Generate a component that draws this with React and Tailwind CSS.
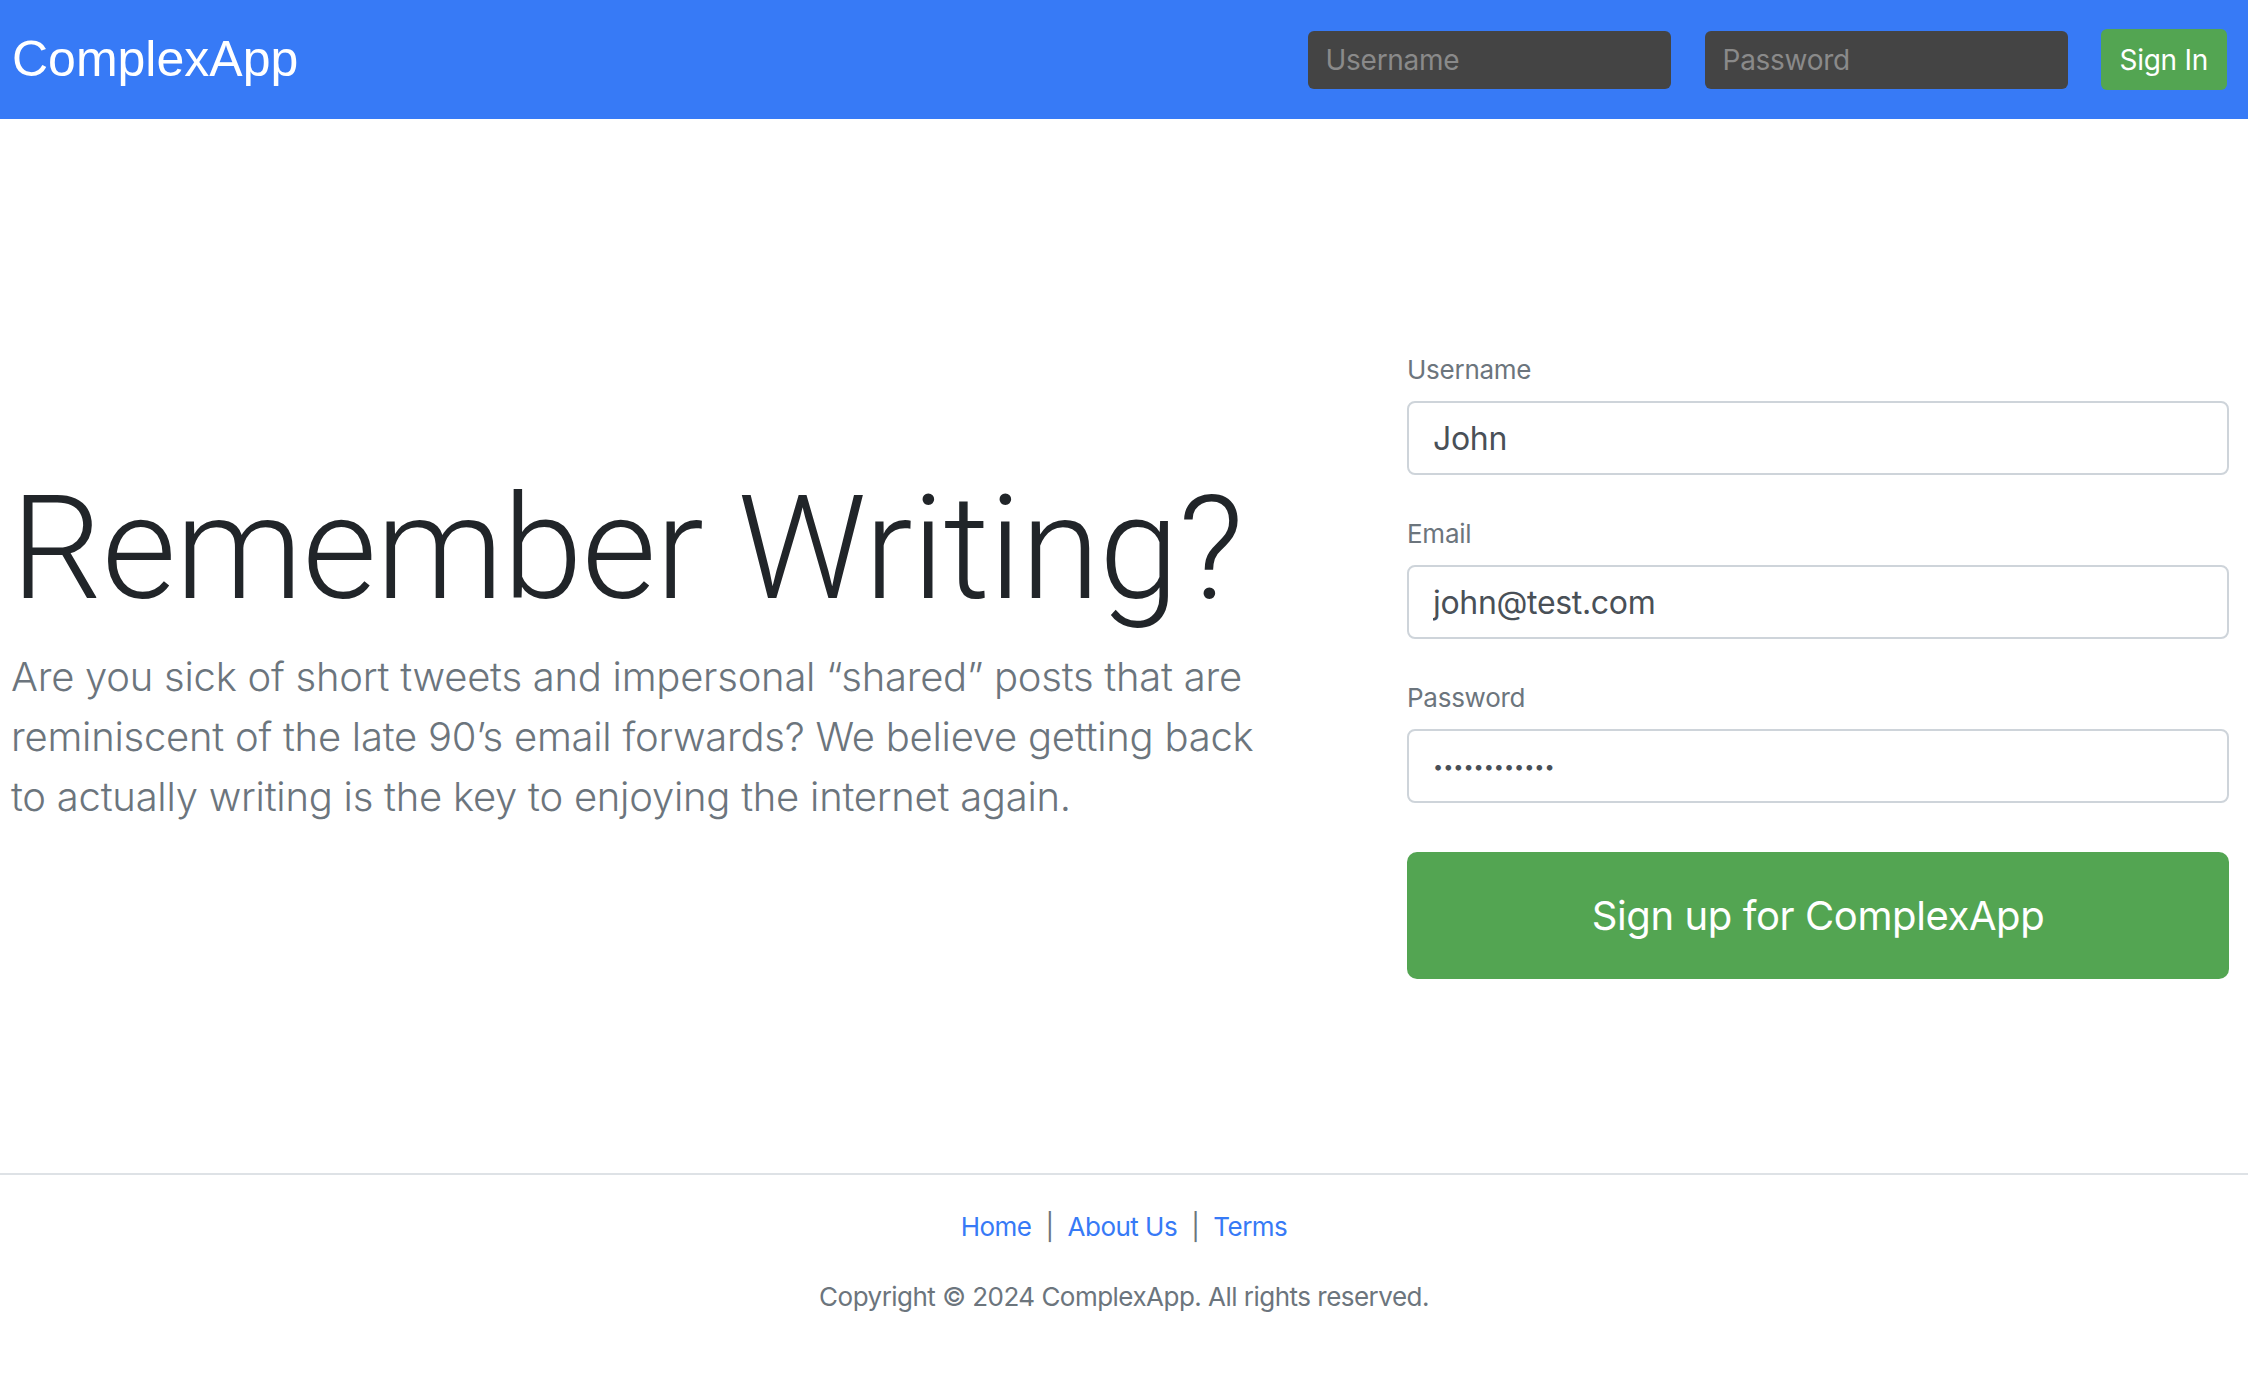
import React from 'react'

const sans = { fontFamily: 'Inter, "Noto Sans", sans-serif' }
const display = { fontFamily: 'Roboto, Inter, sans-serif' }

function Header() {
  return (
    <header className="flex items-center justify-between h-[119px] bg-[#377af6] pl-[12px] pr-[21px]">
      <a href="#" className="text-white text-[50px] leading-none -mt-[2px]" style={{ fontFamily: '"Liberation Sans", Arial, sans-serif' }}>
        ComplexApp
      </a>
      <form className="flex items-center gap-[34px]" onSubmit={(e) => e.preventDefault()}>
        <input
          type="text"
          placeholder="Username"
          className="w-[363px] h-[58px] rounded-[6px] bg-[#444444] px-[18px] text-[28px] tracking-[-0.01em] text-white placeholder:text-[#8a8a8a] outline-none"
        />
        <input
          type="password"
          placeholder="Password"
          className="w-[363px] h-[58px] rounded-[6px] bg-[#444444] px-[18px] text-[28px] tracking-[-0.01em] text-white placeholder:text-[#8a8a8a] outline-none"
        />
        <button className="h-[61px] px-[19px] rounded-[6px] bg-[#53a552] text-white text-[28px] tracking-[-0.01em] -ml-[1px]">
          Sign In
        </button>
      </form>
    </header>
  )
}

function Field({ label, type = 'text', value }) {
  return (
    <div className="flex flex-col">
      <label className="pt-[4px] text-[26px] leading-[38px] tracking-[-0.01em] text-[#6c757d] mb-[12px]">{label}</label>
      <input
        type={type}
        defaultValue={value}
        readOnly
        className={`h-[74px] w-full rounded-[8px] border-2 border-[#ced4da] bg-white px-[24px] text-[#495057] outline-none ${
          type === 'password' ? 'text-[18px]' : 'text-[32px] tracking-[-0.01em]'
        }`}
      />
    </div>
  )
}

export default function App() {
  return (
    <div className="min-h-screen bg-white text-[#212529]" style={sans}>
      <Header />

      <main className="flex items-center pt-[228px] pb-[194px] pl-[11px] pr-[19px]">
        <div className="w-[1290px] shrink-0">
          <h1 className="text-[144px] leading-[1.2] font-light tracking-[-0.8px] mb-[12px] whitespace-nowrap" style={display}>
            Remember Writing?
          </h1>
          <p className="text-[40px] leading-[60px] font-light tracking-[-0.25px] text-[#6c757d] mb-[36px]">
            Are you sick of short tweets and impersonal “shared” posts that are
            <br />
            reminiscent of the late 90’s email forwards? We believe getting back
            <br />
            to actually writing is the key to enjoying the internet again.
          </p>
        </div>

        <form className="ml-auto w-[822px] flex flex-col gap-[36px]" onSubmit={(e) => e.preventDefault()}>
          <Field label="Username" value="John" />
          <Field label="Email" value="john@test.com" />
          <Field label="Password" type="password" value="secretpasswd" />
          <button className="mt-[13px] h-[127px] w-full rounded-[10px] bg-[#53a552] text-white text-[40px] tracking-[-0.01em]">
            Sign up for ComplexApp
          </button>
        </form>
      </main>

      <footer className="border-t-2 border-[#dee2e6] pt-[32px] text-[26px] leading-[39px] tracking-[-0.02em] text-center">
        <p className="flex justify-center gap-[14px]">
          <a href="#" className="text-[#377af6]">Home</a>
          <span className="text-[#6c757d]">|</span>
          <a href="#" className="text-[#377af6]">About Us</a>
          <span className="text-[#6c757d]">|</span>
          <a href="#" className="text-[#377af6]">Terms</a>
        </p>
        <p className="mt-[31px] text-[#6c757d]">Copyright © 2024 ComplexApp. All rights reserved.</p>
      </footer>
    </div>
  )
}
